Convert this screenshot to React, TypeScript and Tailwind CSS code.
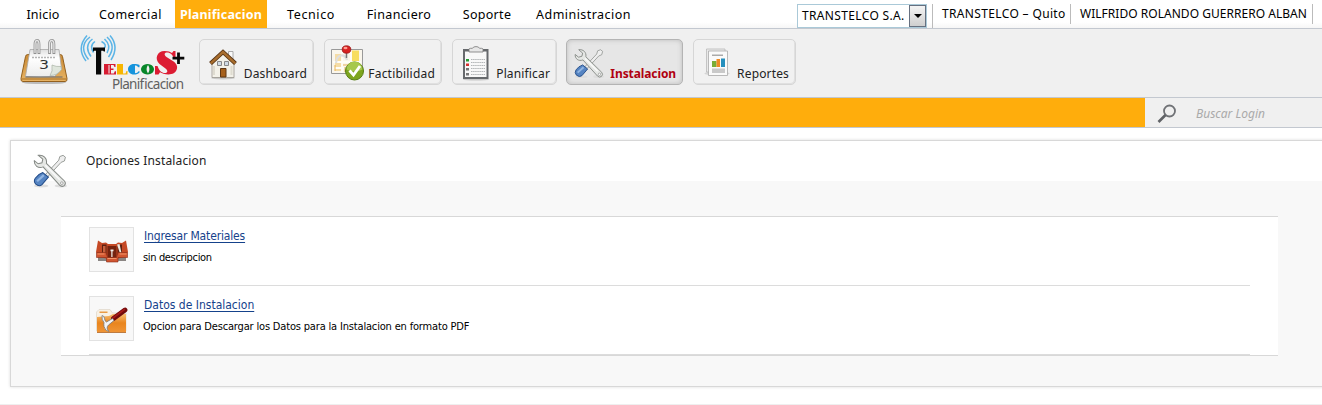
import type { ReactNode } from "react";

const sans = "font-['Noto_Sans',sans-serif]";
const tahoma = "font-['DejaVu_Sans_Condensed','DejaVu_Sans',sans-serif] [font-stretch:condensed]";

function CalendarIcon() {
  return (
    <svg width="48" height="46" viewBox="0 0 48 46">
      <defs>
        <linearGradient id="page" x1="0" y1="0" x2="0" y2="1">
          <stop offset="0" stopColor="#dedede" />
          <stop offset=".3" stopColor="#fff" />
          <stop offset="1" stopColor="#ececec" />
        </linearGradient>
        <linearGradient id="wood" x1="0" y1="0" x2="0" y2="1">
          <stop offset="0" stopColor="#c98a35" />
          <stop offset="1" stopColor="#e8b465" />
        </linearGradient>
      </defs>
      <ellipse cx="24" cy="43.5" rx="22" ry="1.6" fill="#bbb" />
      <path d="M7.5 15.5h33q1.500 0 2 2l4.500 22q.5 3-2 3h-42q-2.500 0-2-3l4.500-22q.5-2 2-2z" fill="url(#wood)" stroke="#93601e" />
      <path d="M1.500 40h45" stroke="#a66e25" strokeWidth="1.200" />
      <path d="M10 10.500h29l2.500 19.500-7 7.500q-14 1-29 0z" fill="url(#page)" stroke="#aaa" strokeWidth=".8" />
      <path d="M5.500 38h37" stroke="#666" strokeWidth="1.200" />
      <path d="M12 18.500h24" stroke="#b4b4b4" strokeWidth="1.300" strokeDasharray="2 1" />
      <path d="M30 36.500q3-4 2-10.500 4 2 9 1.500l.5 3q-4 6-11.500 6z" fill="#dfe6dc" stroke="#a9b3a5" strokeWidth=".7" />
      <text x="19" y="30" fontSize="13" fontFamily="DejaVu Sans" textLength="10" lengthAdjust="spacingAndGlyphs" fill="#333">3</text>
      <g fill="none">
        <path d="M15 15V5.500q0-4 2-4t2 4V15M29.500 15V5.500q0-4 2.200-4t2.200 4V15" stroke="#909090" strokeWidth="2.800" />
        <path d="M15 14V5.500q0-4 2-4t2 4V14M29.500 14V5.500q0-4 2.200-4t2.200 4V14" stroke="#e4e4e4" strokeWidth="1.300" />
      </g>
    </svg>
  );
}

function Logo() {
  return (
    <svg width="108" height="58" viewBox="80 34 108 58">
      <g fill="none" stroke="#5bb4e6" strokeWidth="1.500">
        <path d="M95 41.500q-6 4-1.500 11M92.500 39q-9 7-1.500 17.500M90 37q-12 9-1.500 22.500M87 35.500q-11 12.500-1 25.500" />
        <path d="M101.500 41.500q6 3 2.500 7M104.500 39q7 6.500 2.500 14M107 37q9.500 9 1.500 20M110 35.500q9.500 11 1 24.500" />
      </g>
      <path d="M93 47.500h12v4h-1.200l-.6-.8h-2V74.500h-5.200V50.700h-2l-.6.8h-.4z" fill="#080808" />
      <path fillRule="evenodd" d="M104 64h11.500v3h-1l-1-2h-2.500v3.400h2.500v1.500h-2.500v3.600h2.800l1-2.200h1.200v3.200H104zM108.500 65h1v8.500h-1z" fill="#d71c32" />
      <path d="M117 64h6v9.500h2.500l1-2.500h1v3.500H117z" fill="#f7b500" />
      <path d="M134 64c-8 0-8 10.500 0 10.500 2.500 0 4-.5 5.500-2v-1.300h-1c-1.500 2.300-3.500 2.300-3.500 1.500v-7c0-.5 2-.5 3.300 1.600h1.200v-2.400c-1.500-.6-3-.9-5.500-.9z" fill="#1794dc" />
      <path fillRule="evenodd" d="M147.500 64a6.500 5.250 0 1 0 .01 0zM148 65q3 4.300 0 8.500-3-4.200 0-8.500z" fill="#078629" />
      <path d="M175.500 51v8h-1.500c-1-4-3.500-6.500-7-6.500-3 0-3 2.500-.5 4.500l7.500 4.800c6 4.700 3 12.700-5.500 12.700-4 0-6.500-1-8.500-2.200l-1.500 2.200H155v-8.500h2.500c1.500 4.500 4 7 7.500 7 3 0 3-2.500.5-4.500l-6-4.500c-5.500-5-2.500-13 5-13 4 0 5.500.8 7.500 2l1.500-2z" fill="#dc1c33" />
      <path d="M178.500 52.500v11.500M172.500 58.200h11.800" stroke="#080808" strokeWidth="2.800" />
      <text x="112" y="88.700" fontSize="13.500" fontFamily="Noto Sans" textLength="72" fill="#606060">Planificacion</text>
    </svg>
  );
}

function HouseIcon() {
  return (
    <svg width="28" height="32" viewBox="0 0 28 32">
      <ellipse cx="14" cy="29" rx="12" ry="1.500" fill="#c9c9c9" />
      <path d="M19.500 2.500h4.500V12l-4.500-4z" fill="#fafafa" stroke="#999" strokeWidth=".8" />
      <path d="M3 14 14 4l11 10v14.500H3z" fill="#f3f1e9" stroke="#99968e" strokeWidth=".8" />
      <path d="M1.500 14.500 14 3l12.500 11.500" fill="none" stroke="#553213" strokeWidth="4.200" />
      <path d="M1.800 14.300 14 3l12.200 11.300" fill="none" stroke="#a86d2d" strokeWidth="2.400" />
      <path d="M8.500 12.500h4v4h-4zM15.500 12.500h4v4h-4z" fill="#cfdae5" stroke="#888" />
      <path d="M11.500 19.500h5.500V28h-5.500z" fill="#a6601b" stroke="#5e3715" />
      <path d="M5 17v9M22.500 17v9" stroke="#dedbd0" strokeWidth="2" />
    </svg>
  );
}

function MapIcon() {
  return (
    <svg width="35" height="36" viewBox="0 0 35 36">
      <path d="M1.500 4.500h31v24h-31z" fill="#faf6ec" stroke="#999" />
      <path d="M5 9h7v17H5z" fill="#f5dca5" />
      <path d="M22 5.500h7v15h-7z" fill="#f7dd60" />
      <path d="M3 17h28M12 6v22M21 7v20M3 23h15" stroke="#fffdf5" strokeWidth="1.800" />
      <path d="M6 18c1-10 9-9 11-3" fill="none" stroke="#dedede" strokeWidth="2.200" />
      <path d="M13 20h7M5 20v6M15 22v5" stroke="#e8b354" />
      <path d="M16.500 7v6" stroke="#777" strokeWidth="1.500" />
      <ellipse cx="16.500" cy="4.500" rx="4.300" ry="3.700" fill="#d82222" stroke="#971313" strokeWidth=".8" />
      <ellipse cx="15.500" cy="3" rx="2" ry="1.200" fill="#ff9a90" />
      <circle cx="24.500" cy="26" r="9" fill="#7da51e" stroke="#567d12" />
      <path d="M16.500 24.500a8 8 0 0 1 16 0q-8 4-16 0z" fill="#a6c84d" />
      <path d="m19.500 25.500 4 4.500 6.500-9" fill="none" stroke="#fff" strokeWidth="2.800" />
    </svg>
  );
}

function ClipboardIcon() {
  return (
    <svg width="28" height="35" viewBox="0 0 28 35">
      <ellipse cx="14" cy="33.500" rx="13" ry="1" fill="#c8c8c8" />
      <path d="M1 3h25.500v30H1z" fill="#66696c" />
      <path d="M3 5.500h21.500v25.500H3z" fill="#f8f8f8" />
      <path d="M7 6V3.500Q7 2.300 8.500 2.300h2Q11 .6 14 .6t3.500 1.700h2q1.500 0 1.500 1.200V6z" fill="#e7e7e7" stroke="#777" strokeWidth=".8" />
      <path d="M9 13.500h14M9 16.500h14M9 19.500h14M9 22.500h14M9 25.500h14M9 28.500h14" stroke="#b2b5b7" strokeWidth="1" strokeDasharray="1.500 .6" />
      <path d="M4 13h3v2.500H4z" fill="#269c32" />
      <path d="M4 17.500h3V20H4z" fill="#d83131" />
      <path d="M4 22h3v2.500H4zM4 27h3v2.500H4z" fill="#777" />
    </svg>
  );
}

function ToolsIcon({ className }: { className: string }) {
  return (
    <svg className={className} viewBox="0 0 33 34">
      <ellipse cx="8" cy="31" rx="7" ry="1.500" fill="#ddd" />
      <ellipse cx="27" cy="31" rx="6" ry="1.500" fill="#ddd" />
      <path d="m12 20 13-14 1-3.500 3.200-1.200 2.300 1.800-1 3.700-3.200 1.300-13 14z" fill="#eee" stroke="#929692" strokeWidth=".9" />
      <path d="m9.500 18 5.500 4.500-6.300 7.300q-2.700 2.300-6-.5-2.500-2.800-.5-5.800 2.500-3.800 7.300-5.500z" fill="#5584c2" stroke="#244d89" />
      <path d="m10.500 20.500-6.500 6" stroke="#91b5e2" strokeWidth="2.200" />
      <path d="M5.200 1.300C10 .5 14 4.200 13 9l17.500 17.200q2 2.500-.3 4.500-2.200 1.700-4.400-.5L9.800 12.500C5 14.500.8 11 1.300 6.500L5 9.500l3.700-1L9.500 5z" fill="#e5e7e4" stroke="#858985" strokeWidth="1" />
      <path d="m12 11 14 14" stroke="#fafafa" strokeWidth="1.500" />
      <circle cx="28" cy="28.300" r="1.300" fill="#fff" stroke="#888" strokeWidth=".7" />
    </svg>
  );
}

function ReportIcon() {
  return (
    <svg width="26" height="30" viewBox="0 0 26 30">
      <ellipse cx="13" cy="25.500" rx="12.500" ry="2" fill="#d5d5d5" />
      <path d="M2.500 1h18.500v23H2.500z" fill="#e9e9e9" stroke="#b9b9b9" strokeWidth=".8" />
      <path d="M4.500 3h19v24.500h-19z" fill="#fafafa" stroke="#aaa" strokeWidth=".8" />
      <path d="M8 6.500h11V8H8z" fill="#aaa" />
      <path d="M8 13h4.500v6H8z" fill="#79ad35" />
      <path d="M12.500 11H16v8h-3.500z" fill="#ee8b23" />
      <path d="M17 10.500h4V19h-4z" fill="#258fbd" />
      <path d="M8 20.500h13v4.500H8z" fill="#c9c9c9" />
    </svg>
  );
}

function SearchIcon() {
  return (
    <svg width="20" height="20" viewBox="0 0 20 20" fill="none">
      <circle cx="12.500" cy="7" r="5.500" stroke="#707276" strokeWidth="1.800" />
      <path d="m8.500 11-7 7" stroke="#606266" strokeWidth="2.600" />
    </svg>
  );
}

function ToolboxIcon() {
  return (
    <svg width="34" height="26" viewBox="0 0 34 26">
      <path d="M3 18h28v4H3z" fill="#8a8583" />
      <path d="M3 1.500 7 4l4-.5 2 1.500h8l2-1.500 4 .5 4-2.500L33 13l-4 5-12 3-12-3-4-5z" fill="#c54925" />
      <path d="M7 5.500h4.500V16L7 15zM22.500 5.500H27V15l-4.500 1z" fill="#5e2010" />
      <path d="M8 7h2.500v7H8z" fill="#c8603c" />
      <path d="M12.500 7h9v12h-9z" fill="#74230f" />
      <path d="M15.500 10.500h3v1.800h-1V18h-1.200v-5.700h-.8z" fill="#f2efea" />
      <path d="m22 5.500 2.500-.5 2 9-1.500.5z" fill="#efeae0" />
      <path d="M1.500 13.500h9.500l1.500 5h9l1.500-5h9.500v5H23V23H11.500v-4.500h-10z" fill="#d15631" stroke="#872a15" strokeWidth=".6" />
      <path d="M12.500 19.500h9M2.500 15h7M24.500 15h7" stroke="#f39468" />
    </svg>
  );
}

function FolderToolIcon() {
  return (
    <svg width="34" height="28" viewBox="0 0 34 28">
      <defs>
        <linearGradient id="folder" x1="0" y1="0" x2="0" y2="1">
          <stop offset="0" stopColor="#f6bd70" />
          <stop offset=".5" stopColor="#e9851e" />
          <stop offset="1" stopColor="#ef9435" />
        </linearGradient>
      </defs>
      <path d="M1.500 24V5L4 2.500h11L17.500 6H31v18z" fill="#f8f1e5" stroke="#ded5c8" strokeWidth=".7" />
      <path d="M4.500 4.500h8V6h-8z" fill="#e99b46" />
      <path d="M2 10 14 9l4-2h13v18H2z" fill="url(#folder)" />
      <path d="M2 25.500h29" stroke="#ad5b12" strokeWidth=".8" />
      <path d="M18.500 11.500 30 3" stroke="#720b0b" strokeWidth="4.800" strokeLinecap="round" />
      <path d="M18 11 29.500 2.300" stroke="#a81a1a" strokeWidth="1.600" strokeLinecap="round" />
      <path d="M7 8.500q2.500.5 2.500 3 0 2.500 2 3.500l6-3.500 1.500 2-5.500 4.500q-3 3 .5 6.500-4-.5-5-5-.3-2.500 0-4-2.500-2.500-2-7z" fill="#f4f4f4" stroke="#777" strokeWidth=".8" />
    </svg>
  );
}

const nav = [
  { label: "Inicio", cell: "w-[86px]", text: "tracking-[0.2px]" },
  { label: "Comercial", cell: "w-[89px]", text: "tracking-[0.5px]" },
  { label: "Planificacion", cell: "w-[92px] bg-[#ffad0c]", text: "font-bold text-white tracking-[0.2px]" },
  { label: "Tecnico", cell: "w-[88px]", text: "tracking-[0.6px]" },
  { label: "Financiero", cell: "w-[88px]", text: "tracking-[0.35px]" },
  { label: "Soporte", cell: "w-[88px]", text: "tracking-[0.3px]" },
  { label: "Administracion", cell: "w-[105px]", text: "tracking-[0.45px]" },
];

function ToolButton({ label, icon, className, iconClass, text }: { label: string; icon: ReactNode; className: string; iconClass: string; text: string }) {
  return (
    <button className={`flex h-[46px] shrink-0 items-start justify-between rounded-[5px] border pr-[6px] ${className}`}>
      <span className={iconClass}>{icon}</span>
      <span className={`mt-[25px] text-[12px] leading-[18px] whitespace-nowrap ${text}`}>{label}</span>
    </button>
  );
}

const idle = "border-[#d6d6d6] bg-[#f1f1f1] shadow-[inset_-1px_-1px_0_#e0e0e0]";

function Option({ icon, title, description, titleClass, descClass }: { icon: ReactNode; title: string; description: string; titleClass: string; descClass: string }) {
  return (
    <li className="flex h-[69px] border-b border-[#dcdcdc] pt-[10px]">
      <div className="flex size-[45px] items-center justify-center border border-[#e2e2e2] bg-[#f8f8f8] pt-1">{icon}</div>
      <div className={`ml-[9px] ${tahoma}`}>
        <a href="#" className={`ml-px block w-fit text-[12px] leading-[18px] whitespace-nowrap text-[#15428b] underline underline-offset-2 ${titleClass}`}>{title}</a>
        <p className={`mt-[5px] text-[11px] leading-[16px] whitespace-nowrap text-black ${descClass}`}>{description}</p>
      </div>
    </li>
  );
}

export default function App() {
  return (
    <div className={`flex h-[405px] w-[1322px] flex-col overflow-hidden bg-white text-black ${sans}`}>
      <header className="flex h-[29px] shrink-0 border-b border-[#c3c8d0] bg-gradient-to-b from-white from-80% to-[#f6f6f6]">
        <nav className="flex">
          {nav.map((n) => (
            <a key={n.label} href="#" className={`flex justify-center pt-[6px] text-[12.5px] leading-[18px] whitespace-nowrap ${n.cell} ${n.text}`}>{n.label}</a>
          ))}
        </nav>
        <div className="mt-1 ml-[161px] flex h-6 w-[130px] justify-between border border-[#aac9d8] bg-white pl-1 text-[12px]">
          <span className="pt-[2px] leading-[18px] tracking-[0.35px] whitespace-nowrap">TRANSTELCO S.A.</span>
          <span className="flex h-[22px] w-[17px] shrink-0 items-center justify-center border border-[#667080] bg-gradient-to-b from-[#f4f4f4] to-[#cfcfcf]">
            <svg width="8" height="4" viewBox="0 0 8 4"><path d="M0 0h8L4 4z" fill="#000" /></svg>
          </span>
        </div>
        <div className="mt-1 ml-[5px] flex border-l border-[#bbb] text-[12px] leading-[18px]">
          <span className="h-5 w-[138px] border-r border-[#bbb] pt-px pl-[9px] tracking-[0.35px] whitespace-nowrap">TRANSTELCO – Quito</span>
          <span className="h-5 w-[242px] border-r border-[#bbb] pt-px pl-[9px] tracking-[0.03px] whitespace-nowrap">WILFRIDO ROLANDO GUERRERO ALBAN</span>
        </div>
      </header>

      <div className="flex h-[69px] shrink-0 border-b border-[#c3c8d0] bg-[#f0f0f0]">
        <div className="mt-[10px] ml-5 w-[60px]"><CalendarIcon /></div>
        <div className="mt-[5px] w-[119px]"><Logo /></div>
        <div className="mt-[10px] flex text-[#222]">
          <ToolButton label="Dashboard" icon={<HouseIcon />} className={`w-[115px] ${idle}`} iconClass="mt-[9px] ml-[9px]" text="tracking-[0.12px]" />
          <ToolButton label="Factibilidad" icon={<MapIcon />} className={`ml-[10px] w-[118px] ${idle}`} iconClass="mt-[5px] ml-[5px]" text="tracking-[0.2px]" />
          <ToolButton label="Planificar" icon={<ClipboardIcon />} className={`ml-[10px] w-[105px] ${idle}`} iconClass="mt-[6px] ml-[9px]" text="tracking-[0.15px]" />
          <ToolButton label="Instalacion" icon={<ToolsIcon className="h-[32px] w-[30px]" />} className="ml-[9px] w-[117px] border-[#b4b4b4] bg-[#e6e6e6] shadow-[inset_0_0_5px_#bdbdbd]" iconClass="mt-[8px] ml-[7px]" text="font-bold text-[#b00010] tracking-[-0.1px]" />
          <ToolButton label="Reportes" icon={<ReportIcon />} className={`ml-[10px] w-[103px] ${idle}`} iconClass="mt-[8px] ml-[10px]" text="tracking-[0.15px]" />
        </div>
      </div>

      <div className="flex h-[30px] shrink-0 justify-end border-b border-[#c3c8d0] bg-[#ffad0c]">
        <div className="flex w-[177px] bg-[#f0f0f0]">
          <span className="mt-[6px] ml-3"><SearchIcon /></span>
          <span className="mt-[7px] ml-[19px] text-[12px] leading-[18px] whitespace-nowrap text-[#aaa] italic">Buscar Login</span>
        </div>
      </div>

      <main className="mt-3 ml-[10px] h-[247px] w-[1330px] shrink-0 border border-[#d8d8d8] bg-[#f8f8f8] shadow-[0_0_3px_#ddd]">
        <div className="flex h-10 bg-white">
          <ToolsIcon className="mt-[13px] ml-[22px] h-[35px] w-[34px] shrink-0" />
          <h1 className="mt-[11px] ml-[19px] text-[12px] leading-[18px] whitespace-nowrap text-[#222] tracking-[0.15px]">Opciones Instalacion</h1>
        </div>
        <ul className="mt-[35px] ml-[50px] h-[140px] w-[1217px] border-y border-[#d8d8d8] bg-white px-7">
          <Option icon={<ToolboxIcon />} title="Ingresar Materiales" description="sin descripcion" titleClass="tracking-[-0.15px]" descClass="tracking-[-0.35px]" />
          <Option icon={<FolderToolIcon />} title="Datos de Instalacion" description="Opcion para Descargar los Datos para la Instalacion en formato PDF" titleClass="" descClass="tracking-[-0.17px]" />
        </ul>
      </main>
      <div className="mt-[17px] h-px shrink-0 bg-[#efefef]" />
    </div>
  );
}
